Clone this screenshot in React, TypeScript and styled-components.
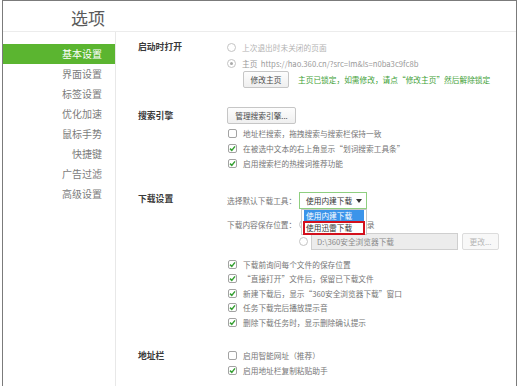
import styled, { createGlobalStyle } from 'styled-components';

const GlobalStyle = createGlobalStyle`
	html, body {
		margin: 0;
		background: #fff;
	}
	body {
		font-family: "Noto Sans CJK SC", "Liberation Sans", sans-serif;
	}
`;

const Frame = styled.div`
	margin-left: 2px;
	width: 513px;
	height: 385px;
	border: 1px solid #7b7b7b;
	border-bottom: none;
	overflow: hidden;
	display: flex;
	flex-direction: column;
`;

const Header = styled.div`
	height: 30px;
	border-bottom: 1px solid #ececec;
	padding-left: 68px;
	font-size: 17px;
	line-height: 33px;
	color: #5a5a5a;
`;

const Body = styled.div`
	flex: 1;
	display: flex;
`;

const Sidebar = styled.div`
	width: 112px;
	border-right: 1px solid #e8e8e8;
	padding-top: 12px;
`;

const NavItem = styled.div<{ $active?: boolean }>`
	height: 20px;
	line-height: 20px;
	padding-right: 13px;
	text-align: right;
	font-size: 10px;
	color: ${(p) => (p.$active ? '#fff' : '#7c7c7c')};
	background: ${(p) => (p.$active ? '#5bb530' : 'transparent')};
`;

const Main = styled.div`
	flex: 1;
	padding: 7px 0 0 22px;
`;

const Section = styled.div<{ $mt?: number }>`
	display: grid;
	grid-template-columns: 89px 1fr;
	margin-top: ${(p) => p.$mt ?? 0}px;
`;

const Label = styled.div<{ $lh: number }>`
	font-size: 8.8px;
	font-weight: 700;
	color: #3a3a3a;
	line-height: ${(p) => p.$lh}px;
`;

const Options = styled.div`
	display: flex;
	flex-direction: column;
`;

const Row = styled.div<{ $h?: number; $mt?: number; $ml?: number; $tone?: 'normal' | 'muted' | 'faint' }>`
	display: flex;
	align-items: center;
	height: ${(p) => p.$h ?? 15}px;
	margin-top: ${(p) => p.$mt ?? 0}px;
	margin-left: ${(p) => p.$ml ?? 0}px;
	font-size: 7.7px;
	white-space: nowrap;
	color: ${(p) => (p.$tone === 'faint' ? '#b3b3b3' : p.$tone === 'muted' ? '#9a9a9a' : '#767676')};
`;

const Radio = styled.span<{ $checked?: boolean; $gap?: number }>`
	position: relative;
	flex: none;
	width: 9px;
	height: 9px;
	margin-right: ${(p) => p.$gap ?? 6}px;
	border: 1px solid #c4c4c4;
	border-radius: 50%;
	background: #fff;
	box-sizing: border-box;
	&::after {
		content: '';
		display: ${(p) => (p.$checked ? 'block' : 'none')};
		position: absolute;
		left: 2px;
		top: 2px;
		width: 3px;
		height: 3px;
		border-radius: 50%;
		background: #aaa;
	}
`;

const Box = styled.span`
	flex: none;
	display: flex;
	align-items: center;
	justify-content: center;
	width: 9px;
	height: 9px;
	margin: 0 6px 0 1px;
	border: 1px solid #a3a3a3;
	border-radius: 2px;
	background: #fff;
	box-sizing: border-box;
`;

const Button = styled.div<{ $w: number; $disabled?: boolean }>`
	flex: none;
	width: ${(p) => p.$w}px;
	height: 17px;
	box-sizing: border-box;
	border: 1px solid ${(p) => (p.$disabled ? '#dcdcdc' : '#c6c6c6')};
	border-radius: 2px;
	background: ${(p) => (p.$disabled ? '#f8f8f8' : 'linear-gradient(#fdfdfd, #efefef)')};
	color: ${(p) => (p.$disabled ? '#b5b5b5' : '#4a4a4a')};
	font-size: 7.7px;
	line-height: 15px;
	text-align: center;
`;

const Hint = styled.span`
	margin-left: 9px;
	color: #3f9f37;
`;

const FieldLabel = styled.span`
	width: 72px;
	flex: none;
`;

const Select = styled.div`
	position: relative;
	width: 68px;
	height: 17px;
	box-sizing: border-box;
	border: 1px solid #8fcf80;
	background: #fff;
	display: flex;
	align-items: center;
	justify-content: space-between;
	padding: 0 4px 0 6px;
	color: #333;
`;

const Arrow = styled.span`
	width: 0;
	height: 0;
	border-left: 3px solid transparent;
	border-right: 3px solid transparent;
	border-top: 4px solid #333;
`;

const Dropdown = styled.div`
	position: absolute;
	left: 1px;
	top: 16px;
	width: 66px;
	background: #fff;
	border: 1px solid #c8c8c8;
	box-sizing: border-box;
	padding: 0 2px;
	z-index: 2;
`;

const DropItem = styled.div<{ $selected?: boolean; $marked?: boolean }>`
	height: 12px;
	line-height: 12px;
	padding-left: 2px;
	box-sizing: border-box;
	font-size: 7.7px;
	color: ${(p) => (p.$selected ? '#fff' : '#333')};
	background: ${(p) => (p.$selected ? '#3b94ea' : '#fff')};
	outline: ${(p) => (p.$marked ? '2px solid #d3101c' : 'none')};
	outline-offset: -1px;
`;

const PathInput = styled.div`
	width: 147px;
	height: 17px;
	box-sizing: border-box;
	border: 1px solid #cfcfcf;
	background: #ececec;
	color: #8a8a8a;
	line-height: 15px;
	padding-left: 5px;
	margin-right: 4px;
`;

const Check = () => (
	<svg width="7" height="7" viewBox="0 0 7 7">
		<path d="M1 3.6 L2.8 5.4 L6 1.4" fill="none" stroke="#36a033" strokeWidth="1.5" />
	</svg>
);

const CheckRow = ({ text, checked, h }: { text: string; checked?: boolean; h?: number }) => (
	<Row $h={h}>
		<Box>{checked && <Check />}</Box>
		{text}
	</Row>
);

const nav = ['基本设置', '界面设置', '标签设置', '优化加速', '鼠标手势', '快捷键', '广告过滤', '高级设置'];

const downloadChecks = [
	'下载前询问每个文件的保存位置',
	'“直接打开”文件后，保留已下载文件',
	'新建下载后，显示“360安全浏览器下载”窗口',
	'任务下载完后播放提示音',
	'删除下载任务时，显示删除确认提示',
];

export default function App() {
	return (
		<>
			<GlobalStyle />
			<Frame>
				<Header>选项</Header>
				<Body>
					<Sidebar>
						{nav.map((n, i) => (
							<NavItem key={n} $active={i === 0}>
								{n}
							</NavItem>
						))}
					</Sidebar>
					<Main>
						<Section>
							<Label $lh={16}>启动时打开</Label>
							<Options>
								<Row $h={16} $tone="faint">
									<Radio />
									上次退出时未关闭的页面
								</Row>
								<Row $h={16} $tone="muted">
									<Radio $checked />
									主页&nbsp;&nbsp;https://hao.360.cn/?src=lm&amp;ls=n0ba3c9fc8b
								</Row>
								<Row $h={17} $ml={16}>
									<Button $w={46}>修改主页</Button>
									<Hint>主页已锁定，如需修改，请点“修改主页”然后解除锁定</Hint>
								</Row>
							</Options>
						</Section>

						<Section $mt={19}>
							<Label $lh={17}>搜索引擎</Label>
							<Options>
								<Row $h={17}>
									<Button $w={69}>管理搜索引擎...</Button>
								</Row>
								<Row $h={2} />
								<CheckRow text="地址栏搜索，拖拽搜索与搜索栏保持一致" />
								<CheckRow text="在被选中文本的右上角显示“划词搜索工具条”" checked />
								<CheckRow text="启用搜索栏的热搜词推荐功能" checked />
							</Options>
						</Section>

						<Section $mt={21}>
							<Label $lh={13}>下载设置</Label>
							<Options>
								<Row $h={17}>
									<FieldLabel>选择默认下载工具：</FieldLabel>
									<Select>
										使用内建下载
										<Arrow />
										<Dropdown>
											<DropItem $selected>使用内建下载</DropItem>
											<DropItem $marked>使用迅雷下载</DropItem>
										</Dropdown>
									</Select>
								</Row>
								<Row $h={16} $mt={7}>
									<FieldLabel>下载内容保存位置：</FieldLabel>
									<Radio $checked $gap={5} />
									使用默认下载目录
								</Row>
								<Row $h={17} $mt={1} $ml={72}>
									<Radio $gap={3} />
									<PathInput>D:\360安全浏览器下载</PathInput>
									<Button $w={37} $disabled>
										更改...
									</Button>
								</Row>
								<Row $h={7} />
								{downloadChecks.map((t) => (
									<CheckRow key={t} text={t} checked h={14.5} />
								))}
							</Options>
						</Section>

						<Section $mt={18}>
							<Label $lh={15}>地址栏</Label>
							<Options>
								<CheckRow text="启用智能网址（推荐）" />
								<CheckRow text="启用地址栏复制粘贴助手" checked />
							</Options>
						</Section>
					</Main>
				</Body>
			</Frame>
		</>
	);
}
